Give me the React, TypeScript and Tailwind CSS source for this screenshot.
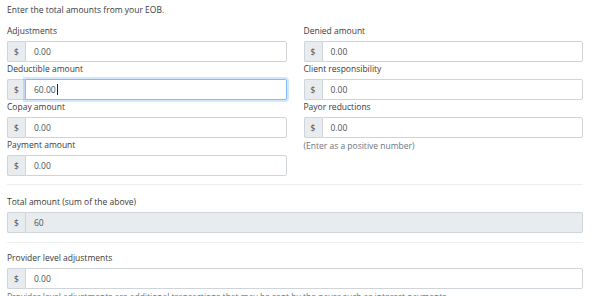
const leftFields = [
  { label: "Adjustments", value: "0.00" },
  { label: "Deductible amount", value: "60.00", focused: true },
  { label: "Copay amount", value: "0.00" },
  { label: "Payment amount", value: "0.00" },
];

const rightFields = [
  { label: "Denied amount", value: "0.00" },
  { label: "Client responsibility", value: "0.00" },
  { label: "Payor reductions", value: "0.00" },
];

function MoneyInput({
  value,
  focused,
  disabled,
}: {
  value: string;
  focused?: boolean;
  disabled?: boolean;
}) {
  return (
    <div className="flex h-[21px] w-full">
      <div className="flex w-[18px] items-center justify-center rounded-l-[2px] border border-r-0 border-[#ced4da] bg-[#e9ecef] text-[#495057]">
        $
      </div>
      <div
        className={
          focused
            ? "flex flex-1 items-center rounded-r-[2px] border border-[#80bdff] bg-white pl-[8px] text-[#495057] shadow-[0_0_0_2px_rgba(0,123,255,0.18)]"
            : disabled
              ? "flex flex-1 items-center rounded-r-[2px] border border-[#ced4da] bg-[#e9ecef] pl-[8px] text-[#495057]"
              : "flex flex-1 items-center rounded-r-[2px] border border-[#ced4da] bg-white pl-[8px] text-[#495057]"
        }
      >
        {value}
        {focused && <span className="ml-px inline-block h-[11px] w-px bg-[#222]" />}
      </div>
    </div>
  );
}

function Field({ label, value, focused }: { label: string; value: string; focused?: boolean }) {
  return (
    <div>
      <div className="mb-[3px] h-[14px] leading-[14px] text-[#3a3a3a]">{label}</div>
      <MoneyInput value={value} focused={focused} />
    </div>
  );
}

export default function App() {
  return (
    <div className="h-[296px] overflow-hidden bg-white pl-[7px] pr-[10px] pt-[3px] font-['Open_Sans',sans-serif] text-[8.5px] leading-[14px] text-[#3a3a3a]">
      <p className="mb-[7px]">Enter the total amounts from your EOB.</p>
      <div className="grid grid-cols-2 gap-x-[17px]">
        <div>
          {leftFields.map((f) => (
            <Field key={f.label} label={f.label} value={f.value} focused={f.focused} />
          ))}
        </div>
        <div>
          {rightFields.map((f) => (
            <Field key={f.label} label={f.label} value={f.value} />
          ))}
          <p className="mt-px text-[#6c757d]">(Enter as a positive number)</p>
        </div>
      </div>
      <hr className="mt-[8px] border-[#eceeef]" />
      <div className="pt-[10px]">
        <div className="mb-[3px] h-[14px]">Total amount (sum of the above)</div>
        <MoneyInput value="60" disabled />
      </div>
      <hr className="mt-[9px] border-[#eceeef]" />
      <div className="pt-[8px]">
        <div className="mb-[3px] h-[14px]">Provider level adjustments</div>
        <MoneyInput value="0.00" />
        <p className="mt-px text-[#6c757d]">
          Provider level adjustments are additional transactions that may be sent by the payer such as
          interest payments.
        </p>
      </div>
    </div>
  );
}
